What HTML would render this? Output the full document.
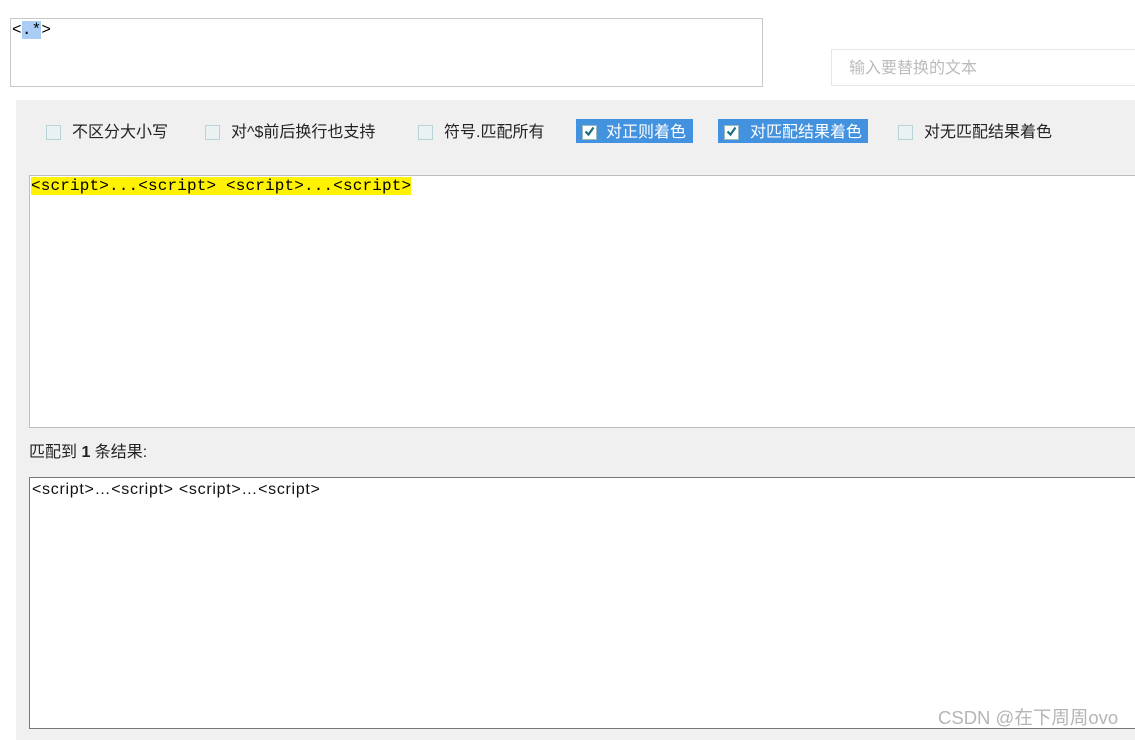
<!DOCTYPE html>
<html><head><meta charset="utf-8"><style>
body{margin:0;width:1135px;height:736px;background:#fff;position:relative;overflow:hidden;font-family:"Liberation Sans","Noto Sans CJK SC",sans-serif;}
.abs{position:absolute;}
#re{left:10px;top:18px;width:751px;height:67px;border:1px solid #c8c8c8;}
#re span{font-family:"Liberation Mono",monospace;font-size:16px;position:absolute;left:1px;top:2px;line-height:18px;letter-spacing:0.2px;}
#rep{left:831px;top:49px;width:310px;height:37px;border:1px solid #e6e6e6;color:#bbb;font-size:16px;line-height:37px;padding-left:17px;box-sizing:border-box;}
#panel{left:16px;top:100px;width:1130px;height:640px;background:#f0f0f0;}
.cb{position:absolute;top:125px;width:13px;height:13px;border:1px solid #b9d3d8;background:#e9f1f2;}
.lb{position:absolute;top:123px;font-size:16px;color:#222;line-height:20px;}
.hl{position:absolute;top:119px;height:24px;background:#4292e0;}
.ck{background:#fff;border-color:#9bb;}
.box{background:#fff;border:1px solid #bdbdbd;box-sizing:border-box;}
</style></head><body>
<div id="re" class="abs"><span>&lt;<span style="position:static;background:#a9cdf5">.*</span>&gt;</span></div>
<div id="rep" class="abs">输入要替换的文本</div>
<div id="panel" class="abs"></div>
<div class="cb" style="left:46px"></div><div class="lb" style="left:72px">不区分大小写</div>
<div class="cb" style="left:205px"></div><div class="lb" style="left:231px">对^$前后换行也支持</div>
<div class="cb" style="left:418px"></div><div class="lb" style="left:444px">符号.匹配所有</div>
<div class="hl" style="left:576px;width:117px"></div>
<div class="cb ck" style="left:582px"></div>
<svg class="abs" style="left:582px;top:124px" width="15" height="15"><path d="M3.5 7.5l3 3 5-7" stroke="#1a6f80" stroke-width="2.2" fill="none"/></svg>
<div class="lb" style="left:606px;color:#fff">对正则着色</div>
<div class="hl" style="left:718px;width:150px"></div>
<div class="cb ck" style="left:724px"></div>
<svg class="abs" style="left:724px;top:124px" width="15" height="15"><path d="M3.5 7.5l3 3 5-7" stroke="#1a6f80" stroke-width="2.2" fill="none"/></svg>
<div class="lb" style="left:750px;color:#fff">对匹配结果着色</div>
<div class="cb" style="left:898px"></div><div class="lb" style="left:924px">对无匹配结果着色</div>
<div class="abs box" style="left:29px;top:175px;width:1110px;height:253px"></div>
<div class="abs" style="left:31px;top:177px;height:18px;background:#fff200;font-family:'Liberation Mono',monospace;font-size:16px;line-height:18px;letter-spacing:0.15px;">&lt;script&gt;...&lt;script&gt; &lt;script&gt;...&lt;script&gt;</div>
<div class="abs" style="left:29px;top:443px;font-size:16px;line-height:20px;color:#222">匹配到 <b>1</b> 条结果:</div>
<div class="abs box" style="left:29px;top:477px;width:1110px;height:252px;border-color:#777"></div>
<div class="abs" style="left:32px;top:480px;font-size:16px;line-height:20px;color:#111;letter-spacing:0.7px">&lt;script&gt;…&lt;script&gt; &lt;script&gt;…&lt;script&gt;</div>
<div class="abs" style="left:938px;top:707px;font-size:18.5px;line-height:22px;color:#b5b5b5">CSDN @在下周周ovo</div>
</body></html>
